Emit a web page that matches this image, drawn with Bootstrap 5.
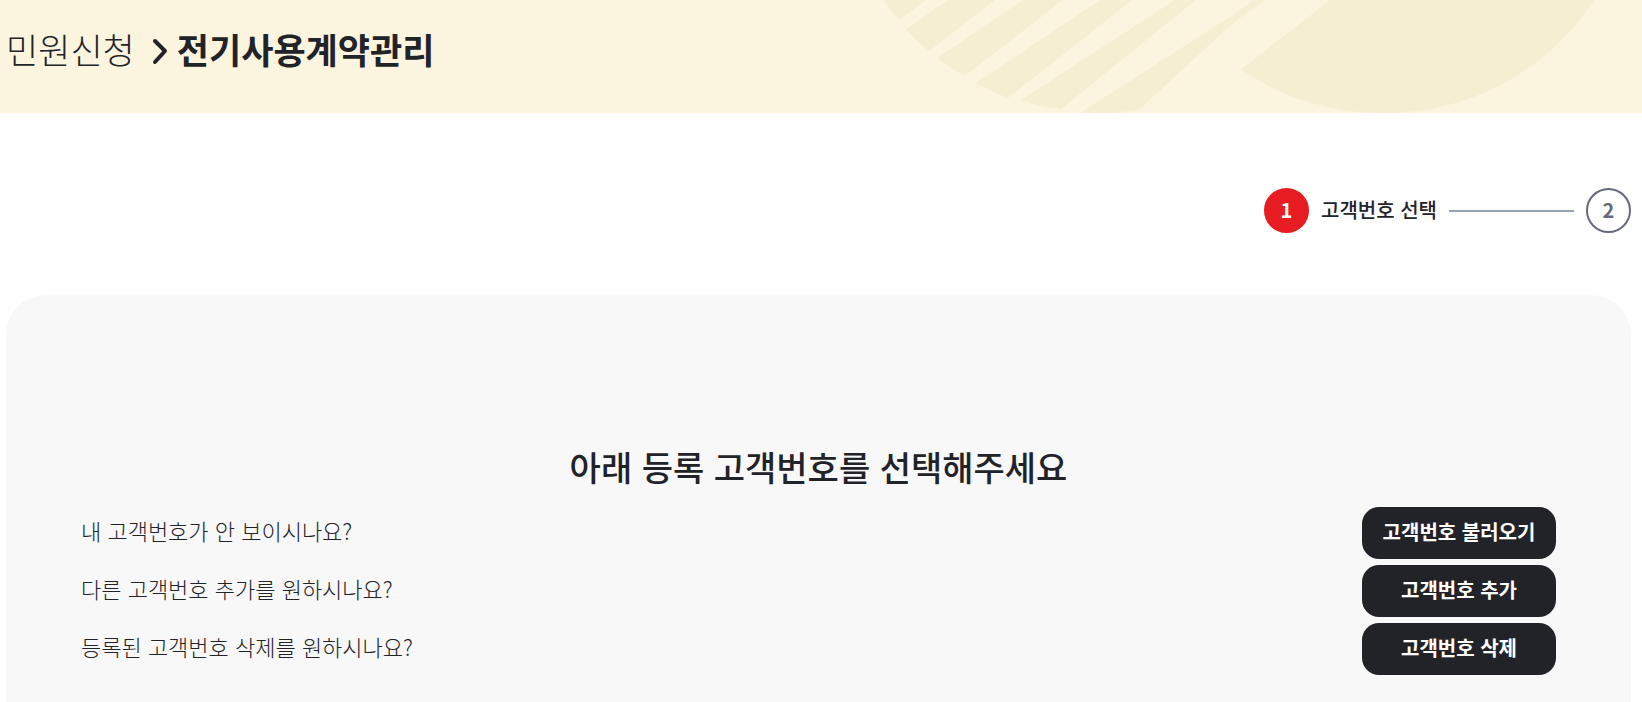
<!DOCTYPE html>
<html lang="ko">
<head>
<meta charset="utf-8">
<meta name="viewport" content="width=device-width, initial-scale=1">
<title>전기사용계약관리</title>
<link href="https://cdn.jsdelivr.net/npm/bootstrap@5.3.0/dist/css/bootstrap.min.css" rel="stylesheet">
<style>
body { font-family: "Noto Sans CJK KR", "Noto Sans", sans-serif; color: #222328; background: #fff; }
.page-banner { background: #fbf5e0; height: 113px; padding: 0 6px 16px; }
.banner-art { top: 0; right: 0; height: 113px; width: 762px; fill: #f6eed2; }
.crumb { font-size: 35px; line-height: 48px; }
.crumb a { color: inherit; font-weight: 300; }
.crumb h1 { font-size: inherit; line-height: inherit; font-weight: 700; }
.crumb svg { width: 16px; height: 28px; margin: 4px 9px 0 17px; }
.page-main { padding: 75px 11px 0 6px; }
.step-list { gap: 12px; margin-bottom: 62px; font-size: 20px; line-height: 30px; }
.step-num { width: 45px; height: 45px; padding-bottom: 2px; border: 2px solid #666a78; color: #666a78; font-weight: 700; }
.step-num.current { background: #e71d23; border-color: #e71d23; color: #fff; }
.step-label { font-weight: 500; padding-bottom: 2px; }
.step-line { width: 125px; height: 2px; background: #98a1b0; }
.select-panel { background: #f8f8f8; border-radius: 40px 40px 0 0; padding: 147px 75px 27px; }
.select-panel h2 { font-size: 34px; line-height: 50px; font-weight: 500; margin-bottom: 15px; }
.help-list { gap: 6px; }
.help-text { font-size: 22px; line-height: 32px; font-weight: 300; padding-bottom: 6px; }
.btn-dark-round { width: 194px; height: 52px; padding: 0 0 3px; border: 0; border-radius: 17px; background: #222328; color: #fff; font-size: 20px; line-height: 30px; font-weight: 700; }
.btn-dark-round:hover { background: #3a3b42; color: #fff; }
</style>
</head>
<body class="d-flex flex-column min-vh-100">
<header class="page-banner position-relative overflow-hidden d-flex align-items-center">
  <svg class="banner-art position-absolute" viewBox="880 0 762 113" aria-hidden="true">
    <path d="M884 0Q891 11 899 20L926 0Z"/>
    <path d="M948 0L906 29Q917 42 929 51L995 0Z"/>
    <path d="M1023 0L937 58Q951 69 965 76L1063 0Z"/>
    <path d="M1100 0L976 83Q992 92 1008 98L1132 0Z"/>
    <path d="M1175 0L1021 100Q1041 107 1061 109L1196 0Z"/>
    <path d="M1253 0Q1240 11 1222 22L1080 113H1108Q1126 112 1140 109L1222 33Q1239 17 1266 0Z"/>
    <path d="M1330 0L1241 69.500A248 248 0 0 0 1387 113A248 248 0 0 0 1594 0Z"/>
  </svg>
  <nav class="crumb position-relative d-flex align-items-center" aria-label="현재 위치">
    <a href="#" class="text-decoration-none">민원신청</a>
    <svg viewBox="0 0 16 28" fill="none" stroke="#222328" stroke-width="4" stroke-linecap="round" stroke-linejoin="round" aria-hidden="true"><path d="M3 4L13 14L3 25"/></svg>
    <h1 class="mb-0">전기사용계약관리</h1>
  </nav>
</header>
<main class="page-main flex-grow-1 d-flex flex-column">
  <ol class="step-list list-unstyled d-flex justify-content-end align-items-center">
    <li class="step-num current rounded-circle d-flex align-items-center justify-content-center" aria-current="step">1</li>
    <li class="step-label">고객번호 선택</li>
    <li class="step-line" aria-hidden="true"></li>
    <li class="step-num rounded-circle d-flex align-items-center justify-content-center">2</li>
  </ol>
  <section class="select-panel flex-grow-1">
    <h2 class="text-center">아래 등록 고객번호를 선택해주세요</h2>
    <ul class="help-list list-unstyled d-flex flex-column mb-0">
      <li class="d-flex align-items-center justify-content-between">
        <span class="help-text">내 고객번호가 안 보이시나요?</span>
        <button type="button" class="btn btn-dark-round">고객번호 불러오기</button>
      </li>
      <li class="d-flex align-items-center justify-content-between">
        <span class="help-text">다른 고객번호 추가를 원하시나요?</span>
        <button type="button" class="btn btn-dark-round">고객번호 추가</button>
      </li>
      <li class="d-flex align-items-center justify-content-between">
        <span class="help-text">등록된 고객번호 삭제를 원하시나요?</span>
        <button type="button" class="btn btn-dark-round">고객번호 삭제</button>
      </li>
    </ul>
  </section>
</main>
<script src="https://cdn.jsdelivr.net/npm/bootstrap@5.3.0/dist/js/bootstrap.bundle.min.js"></script>
</body>
</html>
